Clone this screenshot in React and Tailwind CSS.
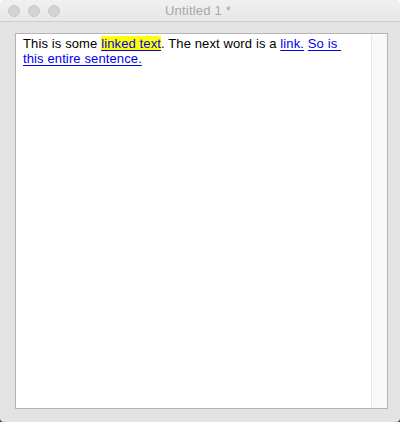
export default function App() {
  const link = "text-[#0000ee] underline underline-offset-[2px] decoration-1"
  return (
    <div className="w-[400px] h-[422px] bg-gradient-to-b from-white to-[#3a3a3a]">
      <div
        className="w-[400px] h-[422px] flex flex-col rounded-t-[5px] rounded-b-[4px] overflow-hidden bg-[#e3e3e3]"
        style={{ fontFamily: '"Liberation Sans", Arial, sans-serif' }}
      >
        <div className="relative h-[22px] shrink-0 flex items-center justify-center bg-gradient-to-b from-[#f0f0f0] to-[#e8e8e8] border-b border-[#cfcfcf]">
          <div className="absolute left-[8px] top-[5px] flex gap-[8px]">
            <span className="w-[12px] h-[12px] rounded-full bg-[#d3d3d3] border border-[#c6c6c6]" />
            <span className="w-[12px] h-[12px] rounded-full bg-[#d3d3d3] border border-[#c6c6c6]" />
            <span className="w-[12px] h-[12px] rounded-full bg-[#d3d3d3] border border-[#c6c6c6]" />
          </div>
          <span className="text-[13px] leading-none text-[#a8a8a8] tracking-[0.2px] ml-[-4px]">Untitled 1 *</span>
        </div>
        <div className="flex-1 pl-[15px] pr-[12px] pt-[11px] pb-[13px]">
          <div className="h-full flex bg-white border border-[#b4b4b4]">
            <div className="flex-1 pl-[7px] pr-[14px] pt-[2px]">
              <p className="text-[13px] leading-[15px] tracking-[0.12px] text-black">
                This is some{" "}
                <a className={`${link} bg-[#ffff00]`}>linked text</a>. The next word is a{" "}
                <a className={link}>link.</a>{" "}
                <a className={link}>
                  So is&nbsp;<wbr />this entire sentence.
                </a>
              </p>
            </div>
            <div className="w-[16px] bg-[#f9f9f9] border-l border-[#e8e8e8]" />
          </div>
        </div>
      </div>
    </div>
  )
}
